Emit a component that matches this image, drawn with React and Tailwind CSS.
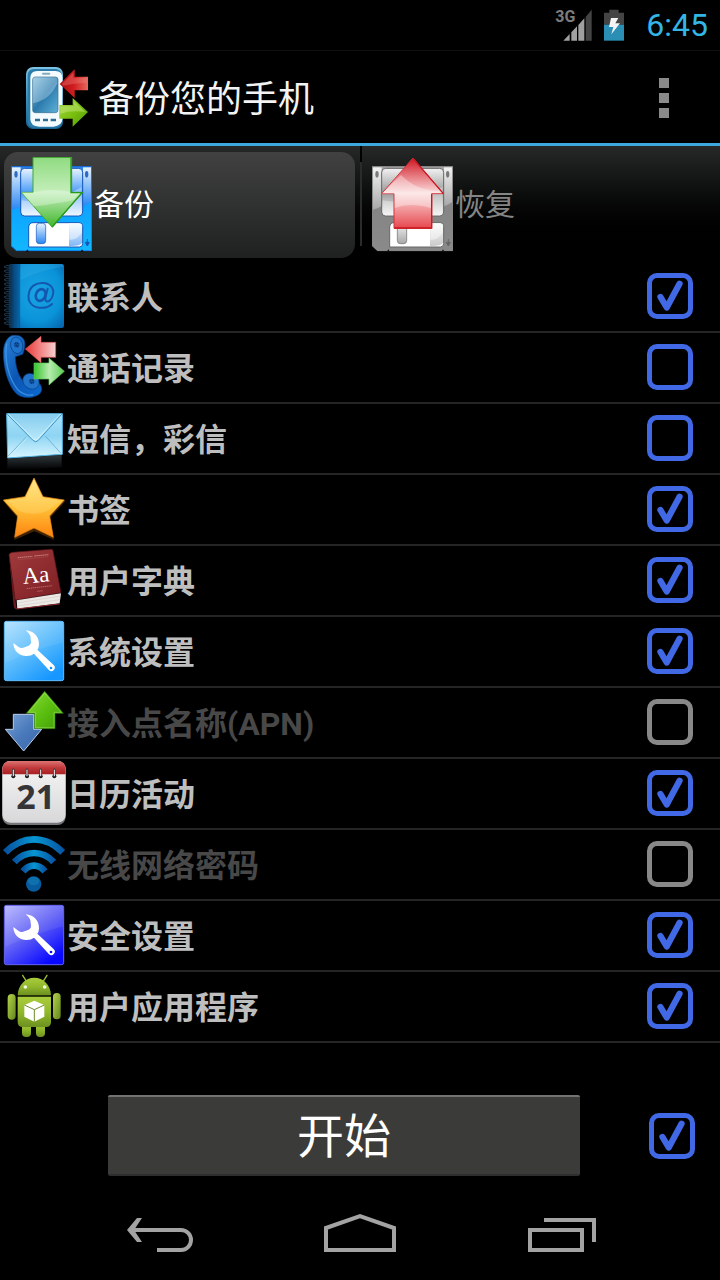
import React from "react";

function Grad({ id, from, mid, to, x2 = 0, y2 = 1 }) {
  return (
    <linearGradient id={id} x1="0" y1="0" x2={x2} y2={y2}>
      <stop offset="0" stopColor={from} />
      {mid && <stop offset="0.5" stopColor={mid} />}
      <stop offset="1" stopColor={to} />
    </linearGradient>
  );
}

function RowSvg({ top, children }) {
  return (
    <svg className="size-16 shrink-0" viewBox={`6 ${top} 192 192`} aria-hidden="true">
      {children}
    </svg>
  );
}

function ContactsIcon() {
  return (
    <RowSvg top={12}>
      <defs>
        <radialGradient id="ct" cx="0.5" cy="0.45" r="0.75">
          <stop offset="0" stopColor="#1aa4e4" />
          <stop offset="0.6" stopColor="#0a93d8" />
          <stop offset="1" stopColor="#0460a8" />
        </radialGradient>
        <Grad id="cs" from="#06243f" mid="#084a80" to="#0864a4" x2={1} y2={0} />
      </defs>
      <rect x="28" y="12" width="164" height="192" rx="7" fill="url(#ct)" />
      <path d="M34 12H58V204H34Q26 204 26 197V19Q26 12 34 12Z" fill="url(#cs)" />
      <path d="M59 12V204" stroke="#0a4f88" strokeWidth="2" />
      <path d="M62 60Q120 30 190 20V16Q188 12 184 12H62Z" fill="#3cb4ec" opacity="0.3" />
      {[18, 31, 44, 57, 70, 83, 96, 109, 122, 135, 148, 161, 174, 187].map((y) => (
        <path key={y} d={`M32 ${y}Q20 ${y - 4} 12 ${y + 2}Q15 ${y + 8} 34 ${y + 5}`} fill="none" stroke="#1c3c55" strokeWidth="3" />
      ))}
      <g fill="none" stroke="#1457b0" strokeLinecap="round">
        <path d="M156 132C146 142 132 145 117 143C94 140 83 124 86 103C89 80 107 68 129 69C150 70 163 84 159 103C156 120 143 129 137 122C134 118 137 109 143 86" strokeWidth="6" />
        <ellipse cx="122" cy="105" rx="14" ry="18" transform="rotate(25 122 105)" strokeWidth="8" />
      </g>
    </RowSvg>
  );
}

function CallsIcon() {
  return (
    <RowSvg top={225}>
      <defs>
        <Grad id="ph" from="#2b86dc" mid="#0b56b4" to="#0c6ad0" x2={1} />
        <Grad id="pr" from="#e83838" mid="#f38484" to="#f8d0d0" x2={1} y2={0} />
        <Grad id="pg" from="#35c42c" mid="#b8ecb0" to="#58cc50" x2={1} y2={0} />
      </defs>
      <path d="M40 226C22 229 12 248 10 275C10 325 24 374 48 400C64 416 96 416 116 404C128 394 128 380 116 368L78 350L68 362C52 342 46 312 46 290L68 283C76 264 78 244 68 234C60 226 50 225 40 226Z" fill="url(#ph)" stroke="#0a3f88" strokeWidth="2" />
      <path d="M20 250C12 300 26 356 54 390C68 404 88 408 100 404" fill="none" stroke="#4ba2ec" strokeWidth="4" opacity="0.7" />
      <ellipse cx="50" cy="256" rx="18" ry="25" transform="rotate(-12 50 256)" fill="#1f74cc" stroke="#073e86" strokeWidth="2" />
      <circle cx="50" cy="254" r="8" fill="#0f509e" />
      <ellipse cx="93" cy="364" rx="26" ry="22" transform="rotate(38 93 364)" fill="#2274ca" stroke="#073e86" strokeWidth="2" />
      <circle cx="95" cy="364" r="8" fill="#0f509e" />
      {[[46, 250], [53, 250], [49, 257], [54, 260], [91, 361], [98, 361], [94, 368], [101, 368]].map(([x, y]) => (
        <circle key={`${x}-${y}`} cx={x} cy={y} r="1.6" fill="#061e42" />
      ))}
      <path d="M76 267L123 229V247H167V292H123V308Z" fill="url(#pr)" stroke="#dc5555" strokeWidth="2" />
      <path d="M102 309H147V294L193 334L147 375V357H102Z" fill="url(#pg)" stroke="#62c45a" strokeWidth="2" />
    </RowSvg>
  );
}

function MailIcon() {
  return (
    <RowSvg top={6}>
      <defs>
        <Grad id="ml" from="#a9e3fa" mid="#8ed4f3" to="#d8f6ff" />
        <Grad id="mf" from="#86cdee" to="#bdeafb" />
        <Grad id="mr" from="#30383c" to="#000000" />
      </defs>
      <path d="M22 164L185 153V190Q100 196 22 198Z" fill="url(#mr)" />
      <path d="M20 29H187V151L23 162Z" fill="url(#ml)" stroke="#55b5e2" strokeWidth="3" />
      <path d="M24 157L80 98M182 147L136 96" fill="none" stroke="#4fa0ca" strokeWidth="2" />
      <path d="M26 159L82 100" fill="none" stroke="#f2fdff" strokeWidth="1.5" />
      <path d="M22 31H185L114 110Q107 117 99 109Z" fill="url(#mf)" />
      <path d="M22 31L99 109Q107 117 114 110L185 31" fill="none" stroke="#3f96c6" strokeWidth="3" />
      <path d="M25 30L101 105Q107 110 112 105L181 30" fill="none" stroke="#e6faff" strokeWidth="2" />
    </RowSvg>
  );
}

function StarIcon() {
  return (
    <RowSvg top={219}>
      <defs>
        <Grad id="st" from="#ffe88a" mid="#ffc137" to="#ff8310" />
      </defs>
      <path d="M102 221L130 277L195 288L149 338L161 404L102 378L42 404L52 338L9 288L74 277Z" fill="#6c3804" opacity="0.6" transform="translate(1 4)" />
      <path d="M102 222L129 278L193 288L149 336L160 400L102 372L44 400L53 336L10 288L75 278Z" fill="url(#st)" stroke="#e88a10" strokeWidth="2" strokeLinejoin="round" />
      <path d="M102 230L125 282L181 291L146 318Q100 340 56 320L22 291L79 282Z" fill="#ffe28a" opacity="0.3" />
    </RowSvg>
  );
}

function DictionaryIcon() {
  return (
    <RowSvg top={6}>
      <defs>
        <Grad id="dc" from="#a13a3c" to="#7c1f25" x2={1} />
      </defs>
      <path d="M27 27L50 188L47 190Q42 188 41 180Z" fill="#6b1a1e" />
      <path d="M27 26Q29 20 38 19L152 10Q158 9 159 14L183 140L50 162Q46 162 45 158Z" fill="url(#dc)" stroke="#531317" strokeWidth="2" />
      <path d="M50 163L183 142L179 172L52 188Z" fill="#ece8e4" />
      <path d="M51 171L182 150M52 180L180 161" stroke="#cfc7c2" strokeWidth="1.5" />
      <path d="M49 189L179 174" stroke="#8f2b2f" strokeWidth="3" />
      <path d="M53 35L97 31M103 30L146 26" stroke="#d08e88" strokeWidth="2.5" strokeDasharray="5 1" />
      <path d="M53 41L145 32" stroke="#b35f5c" strokeWidth="1" />
      <path d="M80 128L158 119M112 136L130 134" stroke="#d08e88" strokeWidth="2" strokeDasharray="4 2" />
      <text x="70" y="114" transform="rotate(-6 70 114)" fill="#ffffff" fontFamily="Liberation Serif, serif" fontSize="69">Aa</text>
    </RowSvg>
  );
}

function WrenchIcon({ id, from, mid, to }) {
  return (
    <RowSvg top={219}>
      <defs>
        <Grad id={id} from={from} mid={mid} to={to} x2={0.7} />
      </defs>
      <rect x="13" y="226" width="178" height="178" rx="6" fill={`url(#${id})`} stroke={mid} strokeWidth="3" />
      <path d="M15 228H189V290Q120 304 15 350Z" fill="#ffffff" opacity="0.07" />
      <path d="M77 253C100 255 118 270 117 296Q116 306 112 311L160 356A10 10 0 0 1 147 373L102 323Q94 330 80 330C56 330 40 312 40 291L57 304Q62 307 69 305L84 300Q93 296 93 287L91 270Q88 262 77 253Z" fill="#ffffff" />
      <circle cx="153" cy="366" r="4" fill={to} />
    </RowSvg>
  );
}

function ApnIcon() {
  return (
    <RowSvg top={6}>
      <defs>
        <Grad id="ag" from="#8fdc3c" mid="#5cc010" to="#3f9c08" x2={1} />
        <Grad id="ab" from="#7aa2d6" mid="#4a7abc" to="#3766aa" x2={1} />
      </defs>
      <path d="M134 10L190 76H165V122H103V76H79Z" fill="url(#ag)" stroke="#2f7c0c" strokeWidth="2" />
      <path d="M134 15L184 73H162V119H106V73H86Z" fill="none" stroke="#a8e86a" strokeWidth="1.5" />
      <path d="M40 79H101V124H125L71 189L16 124H40Z" fill="url(#ab)" stroke="#b7cdea" strokeWidth="3" />
    </RowSvg>
  );
}

function CalendarIcon() {
  return (
    <RowSvg top={219}>
      <defs>
        <Grad id="cp" from="#f6f6f6" to="#d8d8da" />
        <Grad id="ch" from="#dd7474" mid="#c23a3c" to="#a81f22" />
      </defs>
      <rect x="7" y="222" width="190" height="189" rx="24" fill="#76767a" />
      <rect x="7" y="219" width="190" height="185" rx="24" fill="url(#cp)" />
      <path d="M7 259V244Q8 219 33 219H171Q196 219 197 244V259Z" fill="url(#ch)" />
      {[40, 81, 122, 163].map((x) => (
        <g key={x}>
          <circle cx={x} cy="265" r="6" fill="#1b1b1b" />
          <path d={`M${x} 245V264`} stroke="#333333" strokeWidth="7" strokeLinecap="round" />
          <path d={`M${x} 246V263`} stroke="#f4f4f4" strokeWidth="3" strokeLinecap="round" />
        </g>
      ))}
      <text x="107" y="363" textAnchor="middle" fill="#353538" fontFamily="Open Sans, sans-serif" fontWeight="700" fontSize="102">21</text>
    </RowSvg>
  );
}

function WifiIcon() {
  return (
    <RowSvg top={6}>
      <defs>
        <Grad id="wf" from="#0752a0" mid="#0796d2" to="#0757a4" x2={1} y2={0} />
      </defs>
      <g fill="none" stroke="url(#wf)">
        <path d="M16 67Q55 28 102 28Q150 28 188 67" strokeWidth="20" />
        <path d="M43 96Q68 69 102 69Q137 69 161 96" strokeWidth="20" />
        <path d="M69 124Q83 107 102 107Q121 107 135 124" strokeWidth="20" />
      </g>
      <circle cx="101" cy="162" r="23" fill="#085c9e" />
      <ellipse cx="101" cy="153" rx="17" ry="13" fill="#1684bd" opacity="0.5" />
    </RowSvg>
  );
}

function AndroidIcon() {
  return (
    <RowSvg top={6}>
      <defs>
        <Grad id="an" from="#a9cc3b" mid="#92b92c" to="#6d9120" />
        <Grad id="aa" from="#b5d34b" to="#63851c" x2={1} />
      </defs>
      <path d="M78 26L68 10M131 26L141 10" stroke="#9cbf35" strokeWidth="4" strokeLinecap="round" />
      <path d="M53 69C54 39 76 17 103 17C130 17 152 39 153 69Z" fill="url(#an)" />
      <circle cx="76" cy="45" r="5.500" fill="#f1f6dc" />
      <circle cx="134" cy="45" r="5.500" fill="#f1f6dc" />
      <rect x="66" y="150" width="27" height="45" rx="12" fill="url(#an)" />
      <rect x="108" y="150" width="27" height="45" rx="12" fill="url(#an)" />
      <rect x="23" y="66" width="24" height="77" rx="12" fill="url(#aa)" />
      <rect x="159" y="63" width="23" height="79" rx="11" fill="url(#aa)" />
      <path d="M53 74H153V150Q153 165 138 165H68Q53 165 53 150Z" fill="url(#an)" />
      <path d="M54 72H152" stroke="#33440c" strokeWidth="4" />
      <path d="M103 86L133 99V134L103 149L73 134V99Z" fill="#ffffff" />
      <path d="M73 99L103 113L133 99M103 113V149" fill="none" stroke="#6d8c28" strokeWidth="3" />
    </RowSvg>
  );
}

function AppIcon() {
  return (
    <svg className="size-16 shrink-0" viewBox="72 48 192 192" aria-hidden="true">
      <defs>
        <Grad id="hb" from="#7dc3e2" mid="#3f93c0" to="#17628f" />
        <Grad id="hs" from="#8fc2de" mid="#2b79ab" to="#5fb1d8" x2={1} />
        <Grad id="hr" from="#a80f12" mid="#d11d20" to="#e66a60" x2={1} y2={0} />
        <Grad id="hg" from="#a6d854" mid="#7cc010" to="#4f9a06" x2={1} />
      </defs>
      <rect x="78" y="51" width="111" height="186" rx="21" fill="url(#hb)" />
      <rect x="83" y="57" width="102" height="176" rx="18" fill="#2c7dab" />
      <path d="M112 63H166Q187 63 187 84V208Q186 228 160 230H118Q92 230 91 208V84Q91 63 112 63Z" fill="#f3fbff" />
      <rect x="98" y="81" width="76" height="107" rx="8" fill="url(#hs)" stroke="#356d8d" strokeWidth="2" />
      <path d="M99 160Q150 150 172 100V90Q172 82 165 82H107Q99 82 99 90Z" fill="#d6edf8" opacity="0.35" />
      <rect x="126" y="68" width="25" height="6" rx="3" fill="#86aab9" />
      <path d="M105 210H120M129 210H144M152 210H168" stroke="#2f6c8f" strokeWidth="7" />
      <path d="M179 102L224 58V80H264V121H224V144Z" fill="url(#hr)" />
      <path d="M185 102L220 68V84H260V98Q220 100 190 107Z" fill="#f08a80" opacity="0.35" />
      <path d="M178 165H218V144L264 186L218 230V206H178Z" fill="url(#hg)" />
      <path d="M181 169H222V154L256 186Q215 180 181 191Z" fill="#d4f090" opacity="0.4" />
    </svg>
  );
}

const FLOPPY = {
  backup: { edge: "#0a62d8", top: "#2a86f2", mid: "#0ea4ff", bottom: "#12b8ff", plate: "#4d9df8", pale: "#e8f4ff", dark: "#1556b8" },
  restore: { edge: "#858585", top: "#a8a8a8", mid: "#858585", bottom: "#8a8a8a", plate: "#9b9b9b", pale: "#f2f2f2", dark: "#666666" },
};

function FloppyIcon({ kind }) {
  const c = FLOPPY[kind];
  return (
    <svg className="h-[95px] w-[81px] shrink-0" viewBox="33 36 243 285" aria-hidden="true">
      <defs>
        <Grad id={`${kind}b`} from={c.top} mid={c.mid} to={c.bottom} />
        <Grad id={`${kind}p`} from={c.pale} mid={c.plate} to={c.pale} />
        <Grad id={`${kind}w`} from={c.pale} to={c.top} />
        <Grad id="dn" from="#8fdc80" mid="#c4eebb" to="#3fb62a" />
        <Grad id="up" from="#d01420" mid="#fbdcdc" to="#e6474e" />
      </defs>
      <path d="M33 64H276V318H49L33 303Z" fill={`url(#${kind}b)`} />
      <path d="M36 67H62V182Q50 192 36 194Z" fill={`url(#${kind}w)`} />
      <path d="M249 67H273V172Q262 180 249 183Z" fill={`url(#${kind}w)`} />
      <path d="M34 65H275V317H50L34 302Z" fill="none" stroke={c.edge} strokeWidth="2" />
      <ellipse cx="48" cy="88" rx="5" ry="10" fill={c.dark} opacity="0.85" />
      <ellipse cx="260" cy="88" rx="5" ry="10" fill={c.dark} opacity="0.85" />
      <rect x="62" y="70" width="186" height="143" rx="12" fill={`url(#${kind}p)`} stroke={c.dark} strokeWidth="3" />
      <path d="M65 166Q150 184 245 126V200Q245 211 235 211H75Q65 211 65 200Z" fill="#ffffff" opacity="0.35" />
      <path d="M99 233H237Q248 233 248 244V296Q248 306 238 306H86V246Q87 233 99 233Z" fill="#ffffff" stroke={c.dark} strokeWidth="3" />
      <path d="M207 235H237Q246 235 246 244V294Q240 304 207 303Z" fill={`url(#${kind}w)`} opacity="0.6" />
      <path d="M208 284Q232 286 246 262V240Q246 235 236 235H208Z" fill="#ffffff" opacity="0.45" />
      <rect x="109" y="235" width="28" height="61" rx="9" fill={`url(#${kind}w)`} stroke={c.dark} strokeWidth="2" />
      <path d="M262 282V296M256 292L262 303L268 292Z" fill={c.dark} stroke={c.dark} strokeWidth="3" />
      <path d="M77 321L82 313L87 321ZM241 321L246 313L251 321Z" fill="#111111" />
      {kind === "backup" ? (
        <g>
          <path d="M99 37H215V142H248L157 247L64 142H99Z" fill="url(#dn)" stroke="#3da82c" strokeWidth="3" />
          <path d="M101 142Q160 128 214 142H240L219 166Q150 180 100 184L64 142Z" fill="#f2fff0" opacity="0.35" />
          <path d="M213 38V143H246L157 245" fill="none" stroke="#29981b" strokeWidth="4" />
        </g>
      ) : (
        <g>
          <path d="M156 39L247 146H212V250H99V146H62Z" fill="url(#up)" stroke="#d3323a" strokeWidth="3" />
          <path d="M62 146L120 90Q170 140 236 137L245 145H210V190Q150 170 101 190V146Z" fill="#ffffff" opacity="0.35" />
          <path d="M156 40L247 146M212 148V249H100" fill="none" stroke="#c81822" strokeWidth="4" />
        </g>
      )}
    </svg>
  );
}

function Check({ id, label, checked, disabled }) {
  return (
    <span className="grid size-[46px] shrink-0 place-items-center">
      <input
        id={id}
        type="checkbox"
        aria-label={label}
        defaultChecked={checked}
        disabled={disabled}
        className="peer col-start-1 row-start-1 size-[46px] appearance-none rounded-[10px] border-5 border-[#4169e6] disabled:border-[#888888]"
      />
      <svg className="pointer-events-none invisible col-start-1 row-start-1 size-[46px] peer-checked:visible" viewBox="80 39 140 138" aria-hidden="true">
        <path d="M121 111L140 143L179 71" fill="none" stroke="#4169e6" strokeWidth="19" strokeLinecap="round" strokeLinejoin="round" />
      </svg>
    </span>
  );
}

const ITEMS = [
  { id: "contacts", name: "联系人", icon: <ContactsIcon />, checked: true },
  { id: "calls", name: "通话记录", icon: <CallsIcon />, checked: false },
  { id: "messages", name: "短信，彩信", icon: <MailIcon />, checked: false },
  { id: "bookmarks", name: "书签", icon: <StarIcon />, checked: true },
  { id: "dictionary", name: "用户字典", icon: <DictionaryIcon />, checked: true },
  { id: "system", name: "系统设置", icon: <WrenchIcon id="w1" from="#b4e2ff" mid="#62bffc" to="#1697ff" />, checked: true },
  { id: "apn", name: "接入点名称(APN)", icon: <ApnIcon />, disabled: true },
  { id: "calendar", name: "日历活动", icon: <CalendarIcon />, checked: true },
  { id: "wifi", name: "无线网络密码", icon: <WifiIcon />, disabled: true },
  { id: "security", name: "安全设置", icon: <WrenchIcon id="w2" from="#b8b8ff" mid="#6464f6" to="#0808ff" />, checked: true },
  { id: "apps", name: "用户应用程序", icon: <AndroidIcon />, checked: true },
];

function StatusBar() {
  return (
    <div className="flex h-[51px] items-center justify-end gap-3 border-b border-[#101010] pr-3">
      <div className="relative h-8 w-[37px]">
        <span className="absolute top-0 left-0 text-base leading-4 font-bold text-[#7c7c7c]">3G</span>
        <svg className="ml-auto h-8 w-[29px]" viewBox="70 25 87 96" aria-hidden="true">
          <path d="M71 120L90 100V120ZM95 95L112 77V120H95ZM116 73L134 53V120H116Z" fill="#a0a0a0" />
          <path d="M138 49L156 27V120H138Z" fill="#444444" />
        </svg>
      </div>
      <svg className="h-8 w-5" viewBox="192 25 60 96" aria-hidden="true">
        <path d="M208 27H236V36H252V72H192V36H208Z" fill="#444444" />
        <path d="M192 72H252V120H192Z" fill="#2b8fb5" />
        <path d="M213 52H235L226 68H240L214 101L220 79H207Z" fill="#f4f4f4" />
      </svg>
      <time className="ml-2.5 text-[32px] leading-10 text-[#33b5e5]">6:45</time>
    </div>
  );
}

export default function App() {
  return (
    <div lang="zh-CN" className="flex min-h-screen flex-col bg-black font-[Roboto,'Noto_Sans_CJK_SC',sans-serif]">
      <StatusBar />
      <header className="flex h-[95px] items-center border-b-3 border-[#3caadc] pt-0.5 pr-[46px] pl-6">
        <AppIcon />
        <h1 className="ml-2.5 flex-1 pt-1 text-4xl text-[#f3f3f3]">备份您的手机</h1>
        <button type="button" aria-label="更多" className="flex flex-col gap-[5px] p-[5px]">
          <span className="size-2.5 bg-[#8a8a8a]" />
          <span className="size-2.5 bg-[#8a8a8a]" />
          <span className="size-2.5 bg-[#8a8a8a]" />
        </button>
      </header>

      <div role="tablist" className="grid h-[116px] grid-cols-2 items-start bg-linear-to-b from-[#272929] to-black to-95%">
        <button type="button" role="tab" aria-selected="true" className="mt-1.5 mr-[5px] ml-1 flex h-[106px] items-center rounded-[14px] bg-linear-to-b from-[#414141] via-[#303131] to-[#1f2020] pb-0.5 pl-[7px] text-3xl text-white">
          <FloppyIcon kind="backup" />
          <span className="ml-0.5 pt-0.5">备份</span>
        </button>
        <div className="flex items-start">
          <div className="h-[100px] w-0.5 border-t-16 border-black bg-[#2a2b2b]" />
          <button type="button" role="tab" aria-selected="false" className="mt-1.5 flex h-[106px] flex-1 items-center pb-0.5 pl-2.5 text-3xl text-[#858585]">
            <FloppyIcon kind="restore" />
            <span className="ml-0.5 pt-0.5">恢复</span>
          </button>
        </div>
      </div>

      <ul>
        {ITEMS.map((item) => (
          <li key={item.id} className="border-b-2 border-[#252525]">
            <label htmlFor={item.id} className="flex h-[69px] items-center pr-[27px] pb-0.5 pl-0.5">
              {item.icon}
              <span className={item.disabled ? "ml-px flex-1 pt-1 text-[32px] font-bold text-[#484848]" : "ml-px flex-1 pt-1 text-[32px] font-bold text-[#bebebe]"}>
                {item.name}
              </span>
              <Check id={item.id} checked={item.checked} disabled={item.disabled} />
            </label>
          </li>
        ))}
      </ul>

      <div className="flex items-center pt-[52px] pr-[25px] pl-[108px]">
        <button type="button" className="mr-[69px] h-[81px] flex-1 rounded-[2px] border-t-2 border-b-2 border-t-[#737373] border-b-[#2e2e2e] bg-[#3b3b3a] pt-1 text-[47px] text-white">
          开始
        </button>
        <Check id="all" label="全选" checked />
      </div>

      <nav className="mt-auto flex h-24 items-center justify-center gap-[127px]">
        <button type="button" aria-label="返回">
          <svg className="h-12 w-[72px]" viewBox="123 1208 72 48" fill="none" stroke="#a3a3a3" strokeWidth="4">
            <path d="M130 1230H181A10 10 0 0 1 181 1250H157" />
            <path d="M137 1218H142L134 1230L142 1242H137L127 1230Z" fill="#a3a3a3" stroke="none" />
          </svg>
        </button>
        <button type="button" aria-label="主页">
          <svg className="h-12 w-[76px]" viewBox="322 1208 76 48" fill="none" stroke="#a3a3a3" strokeWidth="4">
            <path d="M326 1228L360 1216L394 1228V1250H326Z" />
          </svg>
        </button>
        <button type="button" aria-label="最近任务">
          <svg className="h-12 w-[72px]" viewBox="525 1208 72 48" fill="none" stroke="#a3a3a3" strokeWidth="4">
            <path d="M530 1230H582V1250H530Z" />
            <path d="M544 1220H594V1242" />
          </svg>
        </button>
      </nav>
    </div>
  );
}
